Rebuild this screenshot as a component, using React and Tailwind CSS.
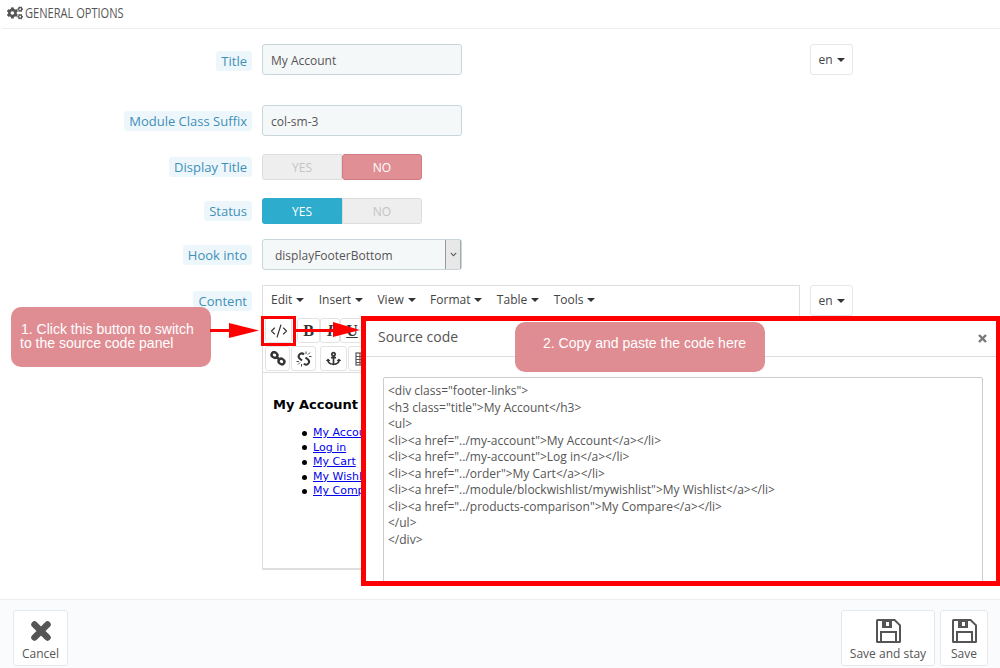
import React from "react";
import { FaCogs, FaAnchor, FaChevronDown } from "react-icons/fa";
import { CodeXml } from "lucide-react";

const sans = "font-['Open_Sans',sans-serif]";

function Label({ children }) {
  return (
    <div className="flex justify-end">
      <span className="h-5 leading-5 px-[5px] rounded-[3px] bg-[#edf7fb] text-[#3f8fb8] text-[13px]">{children}</span>
    </div>
  );
}

function Caret() {
  return <span className="inline-block w-0 h-0 border-x-[4px] border-x-transparent border-t-[4px] border-t-[#333] ml-1 align-middle" />;
}

function LangButton() {
  return (
    <div className="w-[43px] h-[31px] pt-[1px] border border-[#e4e7e9] rounded-[3px] bg-white flex items-center justify-center text-[12px] text-[#444]">
      en<Caret />
    </div>
  );
}

function Input({ value }) {
  return (
    <div className="w-[200px] h-[31px] pl-2 pt-[2px] flex items-center bg-[#f5f8f9] border border-[#c7d6db] rounded-[3px] text-[12px] text-[#555]">{value}</div>
  );
}

function Switch({ on }) {
  return (
    <div className="w-[160px] h-[26px] flex text-[12px]">
      <div className={on ? "w-[80px] pt-[1px] flex items-center justify-center rounded-l-[3px] bg-[#2eacce] text-white" : "w-[80px] pt-[1px] flex items-center justify-center rounded-l-[3px] bg-[#eeeeee] border border-[#dddddd] text-[#c4c4c4]"}>YES</div>
      <div className={on ? "w-[80px] pt-[1px] flex items-center justify-center rounded-r-[3px] bg-[#eeeeee] border border-[#dddddd] text-[#c4c4c4]" : "w-[80px] pt-[1px] flex items-center justify-center rounded-[3px] bg-[#e08f95] border border-[#d27b82] text-white"}>NO</div>
    </div>
  );
}

function Tool({ children, w = "w-[25px]" }) {
  return <div className={`${w} h-[25px] flex items-center justify-center border border-[#e3e3e3] rounded-[3px] bg-white text-[#333] shrink-0`}>{children}</div>;
}

function LinkIcon() {
  return (
    <svg width="16" height="15" viewBox="0 0 16 15" fill="none" stroke="#333" strokeWidth="2.4">
      <ellipse cx="4.5" cy="4" rx="3" ry="2.6" transform="rotate(35 4.5 4)" />
      <ellipse cx="11.5" cy="10.5" rx="3" ry="2.6" transform="rotate(35 11.5 10.5)" />
      <path d="M6 5.5L10 9" />
    </svg>
  );
}

function UnlinkIcon() {
  return (
    <svg width="16" height="16" viewBox="0 0 16 16" fill="none" stroke="#333">
      <path d="M8 3.5Q6 1.5 4 3L3.2 3.8Q1.8 5.6 3.6 7.5L6 9.5M9.5 6.5L12 8.5Q14 10.4 12.6 12.2L11.8 13Q9.8 14.6 7.8 12.6" strokeWidth="2" />
      <path d="M10 .5V3M12 3.5L14 1.5M13 5.5H15.5M.5 10.5H3M2 13.5L4 11.5M5.5 13V15.5" strokeWidth="0.9" />
    </svg>
  );
}

function TableIcon() {
  return (
    <svg width="14" height="14" viewBox="0 0 14 14" fill="none" stroke="#555" strokeWidth="1.2">
      <rect x="1" y="1" width="12" height="12" />
      <path d="M1 4.5H13M1 7.5H13M1 10.5H13M5 1V13M9 1V13" />
    </svg>
  );
}

function Floppy() {
  return (
    <svg width="25" height="24" viewBox="0 0 25 24">
      <path d="M0 1.5Q0 0 1.5 0H19L25 6V22.5Q25 24 23.5 24H1.5Q0 24 0 22.5Z" fill="#555" />
      <path d="M2 2H18.2L23 6.8V22H2Z" fill="#ffffff" />
      <rect x="6" y="2" width="10" height="7" fill="#555" />
      <rect x="10" y="3" width="3" height="4" fill="#ffffff" />
      <rect x="4" y="12" width="17" height="10" fill="#555" />
      <rect x="6" y="14" width="13" height="8" fill="#ffffff" />
    </svg>
  );
}

function BigX() {
  return (
    <svg width="24" height="24" viewBox="0 0 24 24">
      <path d="M5.5 5.5L18.5 18.5M18.5 5.5L5.5 18.5" stroke="#555" strokeWidth="6.5" strokeLinecap="round" />
    </svg>
  );
}

function FooterButton({ icon, label, w }) {
  return (
    <div className={`${w} h-[56px] bg-white border border-[#e6e9eb] rounded-[3px] flex flex-col items-center pt-[8px] text-[#555]`}>
      {icon}
      <span className="text-[12px] leading-[16px] mt-[3px]">{label}</span>
    </div>
  );
}

const code = [
  '<div class="footer-links">',
  '<h3 class="title">My Account</h3>',
  "<ul>",
  '<li><a href="../my-account">My Account</a></li>',
  '<li><a href="../my-account">Log in</a></li>',
  '<li><a href="../order">My Cart</a></li>',
  '<li><a href="../module/blockwishlist/mywishlist">My Wishlist</a></li>',
  '<li><a href="../products-comparison">My Compare</a></li>',
  "</ul>",
  "</div>",
];

const links = ["My Account", "Log in", "My Cart", "My Wishlist", "My Compare"];

export default function App() {
  return (
    <div className={`${sans} relative w-[1000px] h-[668px] overflow-hidden bg-white flex flex-col`}>
      {/* heading */}
      <div className="h-[29px] ml-[2px] pl-[5px] pb-[3px] border-b border-[#eeeeee] flex items-center gap-[2px] text-[#555]">
        <FaCogs size={16} className="shrink-0" />
        <span className="text-[14px] origin-left scale-x-[0.79] whitespace-nowrap">GENERAL OPTIONS</span>
      </div>

      {/* form */}
      <div className="flex-1 pt-[15px] grid grid-cols-[252px_1fr] gap-x-[10px] content-start">
        <div className="pt-[7px]"><Label>Title</Label></div>
        <div className="flex justify-between pr-[147px]"><Input value="My Account" /><LangButton /></div>

        <div className="mt-[30px] pt-[6px]"><Label>Module Class Suffix</Label></div>
        <div className="mt-[30px]"><Input value="col-sm-3" /></div>

        <div className="mt-[18px] pt-[3px]"><Label>Display Title</Label></div>
        <div className="mt-[18px]"><Switch on={false} /></div>

        <div className="mt-[18px] pt-[3px]"><Label>Status</Label></div>
        <div className="mt-[18px]"><Switch on /></div>

        <div className="mt-[15px] pt-[6px]"><Label>Hook into</Label></div>
        <div className="mt-[15px]">
          <div className="w-[200px] h-[31px] pl-[12px] flex items-center justify-between bg-[#f5f8f9] border border-[#c7d6db] rounded-[3px] text-[12px] text-[#555]">
            <span className="pt-[2px]">displayFooterBottom</span>
            <span className="w-[16px] h-[29px] flex items-center justify-center bg-[#e8e8e8] border-l border-[#999] border-r border-r-[#aaa] text-[#555]"><FaChevronDown size={7} /></span>
          </div>
        </div>

        <div className="mt-[15px] pt-[6px]"><Label>Content</Label></div>
        <div className="mt-[15px] flex gap-[10px] items-start">
          <div className="w-[538px] h-[285px] border border-[#dedede] border-b-2 flex flex-col">
            <div className="h-[29px] shrink-0 pl-[8px] pb-[2px] flex items-center gap-[14.4px] text-[12px] text-[#444] bg-white">
              <span>Edit<Caret /></span>
              <span>Insert<Caret /></span>
              <span>View<Caret /></span>
              <span>Format<Caret /></span>
              <span>Table<Caret /></span>
              <span>Tools<Caret /></span>
            </div>
            <div className="h-[31px] shrink-0 pl-[2px] pt-[3px] flex gap-0 items-start">
              <Tool w="w-[27px]"><CodeXml size={18} strokeWidth={1.5} /></Tool>
              <div className="w-[5px]" />
              <Tool w="w-[23px]"><span className="font-['Liberation_Serif',serif] font-bold text-[16px]">B</span></Tool>
              <Tool w="w-[20px]"><span className="font-['Liberation_Serif',serif] font-bold italic text-[16px]">I</span></Tool>
              <Tool w="w-[24px]"><span className="font-['Liberation_Serif',serif] font-bold underline text-[16px]">U</span></Tool>
            </div>
            <div className="h-[27px] shrink-0 pl-[2px] flex gap-[1px] items-start border-b border-[#dedede]">
              <Tool><LinkIcon /></Tool>
              <Tool><UnlinkIcon /></Tool>
              <div className="w-[2px]" />
              <Tool w="w-[27px]"><FaAnchor size={15} /></Tool>
              <Tool w="w-[27px]"><TableIcon /></Tool>
            </div>
            <div className="flex-1 pl-[10px] pt-[24px] font-['DejaVu_Sans',sans-serif] text-black">
              <div className="font-bold text-[13px] leading-[16px]">My Account</div>
              <ul className="pl-[29px] mt-[13px] text-[11px] leading-[14.6px]">
                {links.map((l) => (
                  <li key={l} className="flex items-center gap-[6px]">
                    <span className="w-[5px] h-[5px] rounded-full bg-black shrink-0" />
                    <span className="text-[#0000ee] underline whitespace-nowrap">{l}</span>
                  </li>
                ))}
              </ul>
            </div>
          </div>
          <LangButton />
        </div>
      </div>

      {/* footer */}
      <div className="h-[69px] shrink-0 border-t border-[#eeeeee] bg-[#fafbfc] pt-[10px] pl-[13px] pr-[12px] flex">
        <FooterButton w="w-[55px]" label="Cancel" icon={<BigX />} />
        <div className="flex-1" />
        <FooterButton w="w-[94px]" label="Save and stay" icon={<Floppy />} />
        <div className="w-[5px]" />
        <FooterButton w="w-[48px]" label="Save" icon={<Floppy />} />
      </div>

      {/* highlight around the source code button */}
      <div className="absolute left-[261px] top-[316px] w-[35px] h-[30px] border-[3px] border-[#ff0000]" />

      {/* source code dialog */}
      <div className="absolute left-[361px] top-[316px] w-[639px] h-[270px] border-[5px] border-r-4 border-[#ff0000] bg-white overflow-hidden">
        <div className="h-[36px] border-b border-[#dddddd] pl-[12px] pr-[9px] pb-[4px] flex items-center justify-between text-[#555]">
          <span className="text-[14px]">Source code</span>
          <svg width="9" height="9" viewBox="0 0 9 9" className="mt-[4px]">
            <path d="M1 1L8 8M8 1L1 8" stroke="#777" strokeWidth="2.4" />
          </svg>
        </div>
        <div className="mt-[20px] ml-[17px] w-[600px] h-[220px] border border-[#cccccc] rounded-[2px] pl-[4px] pt-[5px] text-[12px] leading-[16.5px] text-[#555]">
          {code.map((c) => <div key={c}>{c}</div>)}
        </div>
      </div>

      {/* callouts */}
      <div className="absolute left-[11px] top-[307px] w-[200px] h-[60px] rounded-[10px] bg-[#df8d93] pl-[9px] pt-[15px] font-['Liberation_Sans',sans-serif] text-[14px] leading-[14px] text-white">
        <div className="pl-[1px]">1. Click this button to switch</div>
        <div>to the source code panel</div>
      </div>
      <div className="absolute left-[515px] top-[322px] w-[250px] h-[50px] rounded-[10px] bg-[#df8d93] pl-[28px] pb-[8px] flex items-center font-['Liberation_Sans',sans-serif] text-[14px] text-white">
        2. Copy and paste the code here
      </div>

      {/* arrows */}
      <svg className="absolute left-[210px] top-[320px]" width="50" height="20" viewBox="0 0 50 20">
        <rect x="0" y="9" width="20" height="3" fill="#ff0000" />
        <polygon points="19,3 49,10.5 19,18" fill="#ff0000" />
      </svg>
      <svg className="absolute left-[295px] top-[320px]" width="66" height="20" viewBox="0 0 66 20">
        <rect x="0" y="9" width="40" height="3" fill="#ff0000" />
        <polygon points="38,2 65,10 38,17" fill="#ff0000" />
      </svg>
    </div>
  );
}
